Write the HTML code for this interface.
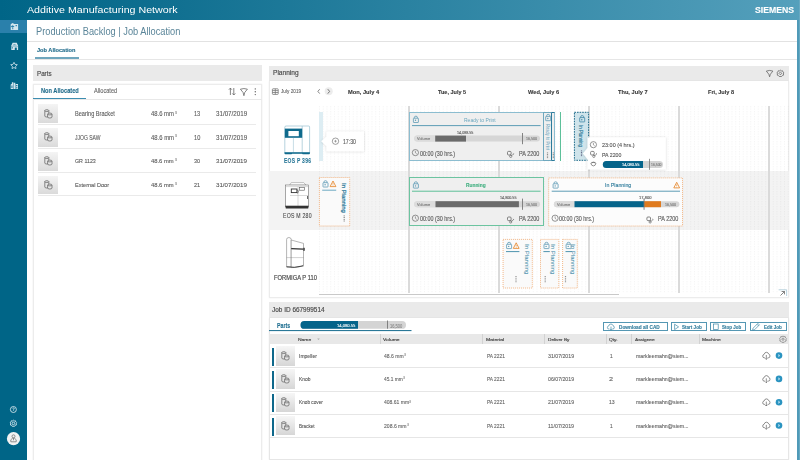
<!DOCTYPE html>
<html><head><meta charset="utf-8">
<style>
*{box-sizing:border-box}
html,body{margin:0;padding:0}
body{width:800px;height:460px;overflow:hidden;position:relative;background:#fff;font-family:"Liberation Sans",sans-serif;color:#555}
.a{position:absolute}
.t{position:absolute;white-space:nowrap;line-height:1;transform-origin:0 0;-webkit-text-stroke:0.1px currentColor}
svg{position:absolute;overflow:visible}
</style></head><body>

<div class="a" style="left:0px;top:0px;width:800px;height:20px;background:linear-gradient(90deg,#006587 0%,#0f6f90 20%,#55a0bc 100%)"></div>
<div class="t" style="left:26.75px;top:5.68px;font-size:8.42px;color:#fff;transform:scaleX(1.2688);-webkit-text-stroke:0;">Additive Manufacturing Network</div>
<div class="t" style="left:754.50px;top:6.57px;font-size:8.17px;font-weight:bold;color:#fff;transform:scaleX(1.0638);">SIEMENS</div>
<div class="a" style="left:0px;top:20px;width:26.5px;height:440px;background:#006587"></div>
<div class="a" style="left:0px;top:20px;width:26.5px;height:12.7px;background:#2a80ab"></div>
<div class="a" style="left:797px;top:20px;width:3px;height:440px;background:#4f9ab8"></div>
<div class="a" style="left:798.7px;top:0px;width:1.3px;height:460px;background:#68a9c2"></div>
<svg style="left:0;top:0" width="27" height="460" viewBox="0 0 27 460">
<g fill="#d3e5ee">
 <path d="M10.7 24.3l1.8-1.3 1.9 1.1h3.7v5.8h-7.4z"/>
 <path d="M11 46.2l1.6-3.4h4.2l1.5 3.4z M11.3 46.6h6.8v3.4h-6.8z"/>
 <path d="M14 62.3l1 2.1 2.3 0.3 -1.7 1.6 0.4 2.3 -2-1.1 -2 1.1 0.4-2.3 -1.7-1.6 2.3-0.3z" fill="none" stroke="#d3e5ee" stroke-width="0.8"/>
 <path d="M10.7 89v-4.6l1.2-0.6v-1.6h1.4v6.8z M13.7 89v-6.2h1.6v6.2z M15.7 89v-5h2.3v5z"/>
</g>
<g fill="#2a80ab"><path d="M12.6 25.2l1.9 1.3-1.9 1.3-1.9-1.3z"/><rect x="15.6" y="25" width="1.3" height="1.2"/><rect x="12.1" y="28.2" width="1.2" height="1"/></g>
<g fill="#006587"><path d="M12.3 45.2q1.8-1.2 4.8 0z"/><rect x="14.8" y="47.6" width="2" height="2.4"/><rect x="11.9" y="47.4" width="1" height="1"/><rect x="16.2" y="85" width="1.1" height="1.2"/><rect x="16.2" y="87.2" width="1.1" height="1.2"/><rect x="11.5" y="85.5" width="0.9" height="2.5"/></g>
<g fill="none" stroke="#e8f1f5" stroke-width="0.8">
 <circle cx="13.4" cy="409.5" r="3"/>
 <path d="M12.6 408.4q0.8-1 1.6 0q0.3 0.8-0.8 1.4v0.8"/>
 <circle cx="13.4" cy="423.4" r="1.3"/>
 <path d="M13.4 420.2l0.9 0.7 1.2-0.1 0.3 1.2 0.9 0.8-0.6 1 0.3 1.2-1.2 0.3-0.6 1h-2.4l-0.6-1-1.2-0.3 0.3-1.2-0.6-1 0.9-0.8 0.3-1.2 1.2 0.1z"/>
</g>
<circle cx="13.5" cy="438.7" r="6.6" fill="#f2f2f2"/>
<g fill="none" stroke="#777" stroke-width="0.8"><circle cx="13.5" cy="436.3" r="1.5"/><path d="M10.8 441.8v-2l1.6-1.5h2.2l1.6 1.5v2z M13.5 438.3v2"/></g>
</svg>
<div class="t" style="left:35.50px;top:26.63px;font-size:10.47px;color:#5a8599;transform:scaleX(0.8837);-webkit-text-stroke:0;">Production Backlog | Job Allocation</div>
<div class="a" style="left:26.5px;top:40.5px;width:770.5px;height:1.5px;background:#e2e2e2"></div>
<div class="t" style="left:36.50px;top:47.57px;font-size:5.10px;font-weight:bold;color:#1f6a8a;transform:scaleX(1.1014);">Job Allocation</div>
<div class="a" style="left:26.5px;top:58.6px;width:770.5px;height:1px;background:#e6e6e6"></div>
<div class="a" style="left:35px;top:57px;width:44px;height:1.8px;background:#6fa6bd"></div>
<div class="a" style="left:33px;top:65px;width:229px;height:15.6px;background:#eaeaea"></div>
<div class="t" style="left:36.50px;top:70.59px;font-size:6.28px;color:#4a4a4a;transform:scaleX(0.9932);-webkit-text-stroke:0.16px currentColor;">Parts</div>
<div class="a" style="left:33px;top:83.7px;width:229px;height:380px;background:#fff;border:1px solid #ececec;box-shadow:0 0 1.5px rgba(0,0,0,0.10)"></div>
<div class="t" style="left:40.50px;top:87.70px;font-size:6.49px;font-weight:bold;color:#1f6a8a;transform:scaleX(0.8713);">Non Allocated</div>
<div class="t" style="left:93.50px;top:87.70px;font-size:6.49px;color:#666;transform:scaleX(0.8689);">Allocated</div>
<div class="a" style="left:33.5px;top:98.6px;width:228px;height:0.8px;background:#e8e8e8"></div>
<div class="a" style="left:33px;top:98.1px;width:53.2px;height:1.4px;background:#3c8db0"></div>
<svg style="left:0;top:0" width="270" height="110" viewBox="0 0 270 110">
<g fill="none" stroke="#666" stroke-width="0.8">
 <path d="M230.4 95v-6.9 M228.9 89.7l1.5-1.6 1.5 1.6 M233.8 88v6.9 M232.3 93.4l1.5 1.6 1.5-1.6"/>
 <path d="M240.4 89.2q3.5-1.3 7 0l-2.7 3.3-0.8 3.2-0.8-3.2z"/>
</g>
<g fill="#666"><circle cx="255.3" cy="88.9" r="0.7"/><circle cx="255.3" cy="91.7" r="0.7"/><circle cx="255.3" cy="94.6" r="0.7"/></g>
</svg>
<div class="a" style="left:38.1px;top:104.3px;width:19.8px;height:18.8px;background:linear-gradient(#f4f4f4,#dadada)"></div>
<svg style="left:43.5px;top:108.60px" width="9" height="10" viewBox="0 0 9 10">
<g fill="#e6e6e6" stroke="#5a5a5a" stroke-width="0.7"><path d="M0.8 1.6v5.4q0 1 2 1t2-1v-5.4"/><ellipse cx="2.8" cy="1.6" rx="2" ry="0.9"/>
<path d="M3.6 5v3q0 1 2.2 1t2.2-1v-3"/><ellipse cx="5.8" cy="5" rx="2.2" ry="0.9"/></g></svg>
<div class="t" style="left:74.50px;top:110.61px;font-size:6.42px;color:#5a5a5a;transform:scaleX(0.8734);">Bearing Bracket</div>
<div class="t" style="left:150.50px;top:110.61px;font-size:6.42px;color:#5a5a5a;transform:scaleX(0.9169);">48.6 mm</div>
<div class="t" style="left:174.50px;top:111.59px;font-size:3.32px;color:#777;transform:scaleX(1.0010);">3</div>
<div class="t" style="left:193.50px;top:110.61px;font-size:6.42px;color:#5a5a5a;transform:scaleX(0.8674);">13</div>
<div class="t" style="left:215.50px;top:110.61px;font-size:6.42px;color:#5a5a5a;transform:scaleX(0.9697);">31/07/2019</div>
<div class="a" style="left:38px;top:124.2px;width:218px;height:0.8px;background:#eaeaea"></div>
<div class="a" style="left:38.1px;top:128.05px;width:19.8px;height:18.8px;background:linear-gradient(#f4f4f4,#dadada)"></div>
<svg style="left:43.5px;top:132.35px" width="9" height="10" viewBox="0 0 9 10">
<g fill="#e6e6e6" stroke="#5a5a5a" stroke-width="0.7"><path d="M0.8 1.6v5.4q0 1 2 1t2-1v-5.4"/><ellipse cx="2.8" cy="1.6" rx="2" ry="0.9"/>
<path d="M3.6 5v3q0 1 2.2 1t2.2-1v-3"/><ellipse cx="5.8" cy="5" rx="2.2" ry="0.9"/></g></svg>
<div class="t" style="left:74.50px;top:134.54px;font-size:6.56px;color:#5a5a5a;transform:scaleX(0.7645);">JJOG SAW</div>
<div class="t" style="left:150.50px;top:134.54px;font-size:6.56px;color:#5a5a5a;transform:scaleX(0.9042);">48.6 mm</div>
<div class="t" style="left:174.50px;top:134.84px;font-size:3.32px;color:#777;transform:scaleX(1.0010);">3</div>
<div class="t" style="left:193.50px;top:134.54px;font-size:6.56px;color:#5a5a5a;transform:scaleX(0.8586);">10</div>
<div class="t" style="left:215.50px;top:134.54px;font-size:6.56px;color:#5a5a5a;transform:scaleX(0.9514);">31/07/2019</div>
<div class="a" style="left:38px;top:147.95px;width:218px;height:0.8px;background:#eaeaea"></div>
<div class="a" style="left:38.1px;top:151.8px;width:19.8px;height:18.8px;background:linear-gradient(#f4f4f4,#dadada)"></div>
<svg style="left:43.5px;top:156.10px" width="9" height="10" viewBox="0 0 9 10">
<g fill="#e6e6e6" stroke="#5a5a5a" stroke-width="0.7"><path d="M0.8 1.6v5.4q0 1 2 1t2-1v-5.4"/><ellipse cx="2.8" cy="1.6" rx="2" ry="0.9"/>
<path d="M3.6 5v3q0 1 2.2 1t2.2-1v-3"/><ellipse cx="5.8" cy="5" rx="2.2" ry="0.9"/></g></svg>
<div class="t" style="left:74.50px;top:158.50px;font-size:5.22px;color:#5a5a5a;transform:scaleX(1.0149);">GR 1123</div>
<div class="t" style="left:150.50px;top:158.50px;font-size:5.22px;color:#5a5a5a;transform:scaleX(1.1178);">48.6 mm</div>
<div class="t" style="left:174.50px;top:158.84px;font-size:3.32px;color:#777;transform:scaleX(1.0010);">3</div>
<div class="t" style="left:193.50px;top:158.50px;font-size:5.22px;color:#5a5a5a;transform:scaleX(1.0421);">30</div>
<div class="t" style="left:215.50px;top:158.50px;font-size:5.22px;color:#5a5a5a;transform:scaleX(1.1865);">31/07/2019</div>
<div class="a" style="left:38px;top:171.7px;width:218px;height:0.8px;background:#eaeaea"></div>
<div class="a" style="left:38.1px;top:175.55px;width:19.8px;height:18.8px;background:linear-gradient(#f4f4f4,#dadada)"></div>
<svg style="left:43.5px;top:179.85px" width="9" height="10" viewBox="0 0 9 10">
<g fill="#e6e6e6" stroke="#5a5a5a" stroke-width="0.7"><path d="M0.8 1.6v5.4q0 1 2 1t2-1v-5.4"/><ellipse cx="2.8" cy="1.6" rx="2" ry="0.9"/>
<path d="M3.6 5v3q0 1 2.2 1t2.2-1v-3"/><ellipse cx="5.8" cy="5" rx="2.2" ry="0.9"/></g></svg>
<div class="t" style="left:74.50px;top:182.59px;font-size:5.28px;color:#5a5a5a;transform:scaleX(1.0571);">External Door</div>
<div class="t" style="left:150.50px;top:182.59px;font-size:5.28px;color:#5a5a5a;transform:scaleX(1.1066);">48.6 mm</div>
<div class="t" style="left:174.50px;top:182.59px;font-size:3.32px;color:#777;transform:scaleX(1.0010);">3</div>
<div class="t" style="left:193.50px;top:182.59px;font-size:5.28px;color:#5a5a5a;transform:scaleX(1.0360);">21</div>
<div class="t" style="left:215.50px;top:182.59px;font-size:5.28px;color:#5a5a5a;transform:scaleX(1.1735);">31/07/2019</div>
<div class="a" style="left:38px;top:195.45px;width:218px;height:0.8px;background:#eaeaea"></div>
<div class="a" style="left:269px;top:65.5px;width:519.7px;height:15.1px;background:#eaeaea"></div>
<div class="t" style="left:272.50px;top:69.70px;font-size:6.54px;color:#4a4a4a;transform:scaleX(1.0061);-webkit-text-stroke:0.16px currentColor;">Planning</div>
<svg style="left:0;top:0" width="800" height="100" viewBox="0 0 800 100">
<g fill="none" stroke="#666" stroke-width="0.8">
 <path d="M766.3 71.1q3.3-1.3 6.6 0l-2.5 3.1-0.8 2.6-0.8-2.6z"/>
 <path d="M780.4 72l1.4 1.4-1.4 1.4-1.4-1.4z"/>
 <path d="M780.4 70.2l1 0.7 1.2-0.1 0.4 1.2 0.9 0.9-0.6 1 0.3 1.2-1.2 0.4-0.8 1h-2.4l-0.8-1-1.2-0.4 0.3-1.2-0.6-1 0.9-0.9 0.4-1.2 1.2 0.1z"/>
</g></svg>
<div class="a" style="left:268.6px;top:80.6px;width:520.6px;height:217px;background:#fff;border:1px solid #ececec;border-top:none;box-shadow:0 0 1.5px rgba(0,0,0,0.08)"></div>
<div class="a" style="left:268.6px;top:171.3px;width:520.4px;height:58.3px;background:#f3f3f3"></div>
<svg style="left:319px;top:106px" width="470" height="186.5"><defs><pattern id="gd" width="3.75" height="2.5" patternUnits="userSpaceOnUse"><rect x="0" y="0" width="0.9" height="1.2" fill="#000" fill-opacity="0.045"/></pattern></defs><rect width="470" height="186.5" fill="url(#gd)"/></svg>
<div class="a" style="left:408.25px;top:106px;width:1.5px;height:186.5px;background:#dadada"></div>
<div class="a" style="left:498.25px;top:106px;width:1.5px;height:186.5px;background:#dadada"></div>
<div class="a" style="left:588.25px;top:106px;width:1.5px;height:186.5px;background:#dadada"></div>
<div class="a" style="left:678.25px;top:106px;width:1.5px;height:186.5px;background:#dadada"></div>
<div class="a" style="left:768.25px;top:106px;width:1.5px;height:186.5px;background:#dadada"></div>
<svg style="left:0;top:0" width="800" height="100" viewBox="0 0 800 100">
<g fill="none" stroke="#777" stroke-width="0.8"><rect x="272.4" y="88.8" width="5.8" height="5.6" rx="0.6"/><path d="M272.4 90.6h5.8 M275.3 88.8v5.6 M272.4 92.5h5.8"/></g>
<path d="M319.7 89.2l-1.8 2.2 1.8 2.2" fill="none" stroke="#666" stroke-width="0.8"/>
<circle cx="328.7" cy="91.3" r="4" fill="#ececec"/>
<path d="M327.8 89.2l1.8 2.2-1.8 2.2" fill="none" stroke="#555" stroke-width="0.8"/>
</svg>
<div class="t" style="left:280.75px;top:88.68px;font-size:5.34px;color:#666;transform:scaleX(0.8833);">July 2019</div>
<div class="t" style="left:347.75px;top:89.68px;font-size:5.34px;font-weight:bold;color:#383838;transform:scaleX(1.0705);">Mon, July 4</div>
<div class="t" style="left:437.50px;top:89.68px;font-size:5.34px;font-weight:bold;color:#383838;transform:scaleX(1.0344);">Tue, July 5</div>
<div class="t" style="left:527.50px;top:89.68px;font-size:5.34px;font-weight:bold;color:#383838;transform:scaleX(1.0632);">Wed, July 6</div>
<div class="t" style="left:617.50px;top:89.68px;font-size:5.34px;font-weight:bold;color:#383838;transform:scaleX(1.0625);">Thu, July 7</div>
<div class="t" style="left:707.50px;top:89.68px;font-size:5.34px;font-weight:bold;color:#383838;transform:scaleX(1.0480);">Fri, July 8</div>
<svg style="left:0;top:0" width="320" height="300" viewBox="0 0 320 300">
<g fill="#fff" stroke="#6ea6bc" stroke-width="0.5">
 <path d="M284.8 127.2q0-1.2 1.2-1.2h22.6q1 0 1 1v26h-24.8z"/>
 <path d="M302.2 126.2v26.8"/>
</g>
<rect x="284.8" y="128.6" width="17.4" height="9.2" fill="#0f6a8c"/>
<rect x="288.4" y="131" width="10.4" height="5.2" fill="#fff"/>
<path d="M293.4 137.8v14.5" stroke="#8fb9ca" stroke-width="0.5"/>
<path d="M284.5 152.3h25.4v1.2q0 0.7-0.7 0.7h-6.5l-0.6-0.5h-10l-0.6 0.5h-6.3q-0.7 0-0.7-0.7z" fill="#0f6a8c"/>
<path d="M289.5 185.2l1.8-2.6h12.4l2.4 2.6z" fill="#fff" stroke="#888" stroke-width="0.5"/>
<rect x="285.7" y="185" width="22.6" height="21.2" fill="#fff" stroke="#666" stroke-width="0.55"/>
<path d="M285.7 186.6h22.6 M298 186.6v19.5 M290 195.5h18" stroke="#aaa" stroke-width="0.45" fill="none"/>
<rect x="291.3" y="189" width="5.6" height="3.6" fill="#fff" stroke="#333" stroke-width="0.9"/>
<path d="M297.6 189.8q1.2 1.6 0 3.6" stroke="#333" stroke-width="0.7" fill="none"/>
<rect x="299.3" y="187.4" width="5.3" height="2.8" fill="#fff" stroke="#555" stroke-width="0.6"/>
<path d="M307.5 196v3" stroke="#444" stroke-width="0.8"/>
<path d="M285.2 205.8h23.6l-0.6 2.6h-22.4z" fill="#333"/>
<g fill="#fff" stroke="#777" stroke-width="0.55">
 <path d="M286.6 239.5q0-2 2.3-2t2.3 2v27.5h-4.6z"/>
 <path d="M291.2 240l12.3 3.4v21.6q-3 2.6-12.3 2.6z"/>
 <path d="M286.6 257.6h16.9" stroke-width="0.35"/>
</g>
<path d="M291.2 248.6l12 0.6" stroke="#333" stroke-width="1.2"/>
<rect x="303.2" y="247.8" width="1.6" height="3" fill="#444"/>
<path d="M286.6 266.8q7 1.5 17-1" stroke="#333" stroke-width="0.9" fill="none"/>
</svg>
<div class="t" style="left:283.50px;top:157.61px;font-size:6.42px;font-weight:bold;color:#2a7898;transform:scaleX(0.7763);letter-spacing:0.35px;">EOS P 396</div>
<div class="t" style="left:282.50px;top:212.59px;font-size:6.28px;color:#4a4a4a;transform:scaleX(0.8219);letter-spacing:0.3px;">EOS M 280</div>
<div class="t" style="left:273.75px;top:274.73px;font-size:6.37px;color:#4a4a4a;transform:scaleX(0.9102);-webkit-text-stroke:0.16px currentColor;">FORMIGA P 110</div>
<div class="a" style="left:319px;top:293.7px;width:300.3px;height:1.8px;background:#c9c9c9"></div>
<svg style="left:0;top:0" width="800" height="300" viewBox="0 0 800 300">
<path d="M778.6 289.8h8v6.2" fill="none" stroke="#9bbfd0" stroke-width="0.7"/>
<path d="M780.5 295.5l4-4 M781.6 291.5h2.9v2.9" fill="none" stroke="#666" stroke-width="0.8"/>
</svg>
<div class="a" style="left:319px;top:112px;width:3.5px;height:49px;background:#ddedf3"></div>
<svg style="left:0;top:0" width="800" height="300" viewBox="0 0 800 300">
<defs><filter id="sh" x="-20%" y="-30%" width="140%" height="160%"><feDropShadow dx="0" dy="0.3" stdDeviation="0.8" flood-color="#000" flood-opacity="0.18"/></filter></defs>
<path d="M326.4 131.5h37.6v19.7h-37.6v-5.3l-5.2-4.6 5.2-4.6z" fill="#fff" filter="url(#sh)"/>
<circle cx="335.5" cy="141.2" r="3.2" fill="none" stroke="#777" stroke-width="0.7"/>
<path d="M335.5 139.9v2.6 M334.2 141.2h2.6" stroke="#777" stroke-width="0.6"/>
</svg>
<div class="t" style="left:342.75px;top:138.59px;font-size:6.28px;color:#555;transform:scaleX(0.8224);">17:30</div>
<div class="a" style="left:408.5px;top:111.8px;width:135.10000000000002px;height:49.000000000000014px;border:1px solid #8cbdd0;background:#efefef"></div>
<svg style="left:0;top:0" width="800" height="460" viewBox="0 0 800 460"><path d="M414.4 118.19999999999999v-0.9q0-1.1 1.5-1.1t1.5 1.1v0.9" fill="none" stroke="#5e9bb5" stroke-width="0.8"/><rect x="413.4" y="118.19999999999999" width="5" height="4.3" rx="0.4" fill="none" stroke="#5e9bb5" stroke-width="0.8"/><circle cx="415.5" cy="120.3" r="0.7" fill="#5e9bb5"/><rect x="412.0" y="125.1" width="128.60000000000002" height="1" fill="#5e9db5"/><rect x="414.2" y="135.6" width="125.80000000000001" height="6.0" rx="3" fill="#d6d6d6"/><path d="M417.2 135.6h18.3v6.0h-18.3a3 3 0 0 1 0-6.0z" fill="#dcdcdc"/><rect x="435.2" y="135.6" width="30.80000000000001" height="6.0" fill="#6b6b6b"/><rect x="522.1" y="133.0" width="0.9" height="11.2" fill="#777"/><circle cx="415.4" cy="152.6" r="3.1" fill="none" stroke="#666" stroke-width="0.7"/><path d="M415.4 150.79999999999998v1.9l1.3 1.1" fill="none" stroke="#666" stroke-width="0.6"/><rect x="507.5" y="151.4" width="3.6" height="3.6" rx="1" fill="none" stroke="#666" stroke-width="0.8"/><circle cx="510.70000000000005" cy="156.4" r="1.1" fill="none" stroke="#666" stroke-width="0.7"/><path d="M510.5 154.7l1.3 1 1.9-1.9 M512.9 153.4l0.9 0.7" fill="none" stroke="#666" stroke-width="0.7"/></svg>
<div class="t" style="left:463.50px;top:117.57px;font-size:5.10px;color:#6aa6be;transform:scaleX(0.9816);-webkit-text-stroke:0;">Ready to Print</div>
<div class="t" style="left:416.50px;top:137.57px;font-size:3.80px;color:#777;transform:scaleX(1.0358);">Volume</div>
<div class="t" style="left:525.50px;top:137.57px;font-size:3.80px;color:#777;transform:scaleX(0.9595);">16,500</div>
<div class="t" style="left:456.75px;top:131.70px;font-size:3.56px;color:#555;transform:scaleX(1.0395);">14,088.55</div>
<div class="t" style="left:419.50px;top:150.61px;font-size:6.42px;color:#555;transform:scaleX(0.8432);">00:00 (30 hrs.)</div>
<div class="t" style="left:518.50px;top:150.61px;font-size:6.42px;color:#555;transform:scaleX(0.8570);">PA 2200</div>
<div class="a" style="left:543.3px;top:111.8px;width:8.4px;height:49px;background:#efefef;border:1px solid #6fa8be;border-right:1.2px solid #2d7a9a"></div>
<div class="a" style="left:551.5px;top:111.8px;width:3.7px;height:49px;background:#efefef;border:1px solid #2d7a9a;border-left:none;border-right:1px solid #8cbdd0"></div>
<svg style="left:0;top:0" width="800" height="460" viewBox="0 0 800 460"><path d="M546.6999999999999 116.39999999999999v-0.9q0-1.1 1.5-1.1t1.5 1.1v0.9" fill="none" stroke="#5e9bb5" stroke-width="0.8"/><rect x="545.6999999999999" y="116.39999999999999" width="5" height="4.3" rx="0.4" fill="none" stroke="#5e9bb5" stroke-width="0.8"/><circle cx="547.8" cy="118.5" r="0.7" fill="#5e9bb5"/><rect x="546.9" y="152.50" width="1.2" height="0.8" fill="#777"/><rect x="546.9" y="154.10" width="1.2" height="0.8" fill="#777"/><rect x="546.9" y="155.70" width="1.2" height="0.8" fill="#777"/><rect x="546.9" y="157.30" width="1.2" height="0.8" fill="#777"/><rect x="552.6999999999999" y="152.50" width="1.2" height="0.8" fill="#777"/><rect x="552.6999999999999" y="154.10" width="1.2" height="0.8" fill="#777"/><rect x="552.6999999999999" y="155.70" width="1.2" height="0.8" fill="#777"/><rect x="552.6999999999999" y="157.30" width="1.2" height="0.8" fill="#777"/></svg>
<div class="t" style="left:550.03px;top:123.60px;font-size:5.59px;color:#6aa6be;transform:rotate(90deg) scaleX(0.7346);-webkit-text-stroke:0;">Ready to Print</div>
<div class="a" style="left:559.6px;top:112px;width:1.2px;height:49px;background:#5dc09a"></div>
<svg style="left:0;top:0" width="800" height="460" viewBox="0 0 800 460"><rect x="574.4" y="112.3" width="14.2" height="48" fill="#cfe4eb" stroke="#1c6a89" stroke-width="1" stroke-dasharray="1.6 1"/></svg>
<svg style="left:0;top:0" width="800" height="460" viewBox="0 0 800 460"><path d="M580.6999999999999 117.6v-0.9q0-1.1 1.5-1.1t1.5 1.1v0.9" fill="none" stroke="#3f87a6" stroke-width="0.8"/><rect x="579.6999999999999" y="117.6" width="5" height="4.3" rx="0.4" fill="none" stroke="#3f87a6" stroke-width="0.8"/><circle cx="581.8" cy="119.7" r="0.7" fill="#3f87a6"/><rect x="580.9" y="150.50" width="1.2" height="0.8" fill="#557"/><rect x="580.9" y="152.10" width="1.2" height="0.8" fill="#557"/><rect x="580.9" y="153.70" width="1.2" height="0.8" fill="#557"/><rect x="580.9" y="155.30" width="1.2" height="0.8" fill="#557"/></svg>
<div class="t" style="left:583.43px;top:125.00px;font-size:5.59px;color:#2d7a9a;transform:rotate(90deg) scaleX(0.7868);-webkit-text-stroke:0.15px currentColor;">In Planning</div>
<svg style="left:0;top:0" width="800" height="300" viewBox="0 0 800 300">
<path d="M587.5 137.3h78.3v32.1h-78.3v-10.2l-4.6-5.6 4.6-5.6z" fill="#fff" filter="url(#sh)"/>
</svg>
<svg style="left:0;top:0" width="800" height="460" viewBox="0 0 800 460"><circle cx="593.4" cy="144.7" r="3.1" fill="none" stroke="#666" stroke-width="0.7"/><path d="M593.4 142.89999999999998v1.9l1.3 1.1" fill="none" stroke="#666" stroke-width="0.6"/><rect x="590.6" y="151.4" width="3.6" height="3.6" rx="1" fill="none" stroke="#666" stroke-width="0.8"/><circle cx="593.8000000000001" cy="156.4" r="1.1" fill="none" stroke="#666" stroke-width="0.7"/><path d="M593.6 154.7l1.3 1 1.9-1.9 M596.0 153.4l0.9 0.7" fill="none" stroke="#666" stroke-width="0.7"/><path d="M590.8 163.3q2.6-2.2 5.2 0q-0.6 2.6-2.6 2.6t-2.6-2.6z M591.6 162.4h3.6" fill="none" stroke="#666" stroke-width="0.7"/><rect x="602.8" y="161" width="60.2" height="7" rx="3.5" fill="#d4d4d4"/><path d="M606.3 161h36.7v7h-36.7a3.5 3.5 0 0 1 0-7z" fill="#05648a"/><rect x="649.1" y="158.8" width="0.8" height="11" fill="#777"/></svg>
<div class="t" style="left:601.75px;top:142.57px;font-size:5.10px;color:#555;transform:scaleX(1.0720);">23:00 (4 hrs.)</div>
<div class="t" style="left:601.75px;top:153.70px;font-size:4.87px;color:#555;transform:scaleX(1.0779);">PA 2200</div>
<div class="t" style="left:621.50px;top:163.70px;font-size:3.56px;color:#fff;transform:scaleX(1.1007);">14,080.55</div>
<div class="t" style="left:650.50px;top:163.70px;font-size:3.56px;color:#777;transform:scaleX(0.9629);">16,500</div>
<svg style="left:0;top:0" width="800" height="460" viewBox="0 0 800 460"><rect x="319.4" y="177.5" width="30.30000000000001" height="48.5" fill="#fafafa" stroke="#f2b07a" stroke-width="0.9" stroke-dasharray="1 1"/></svg>
<svg style="left:0;top:0" width="800" height="460" viewBox="0 0 800 460"><path d="M324.0 182.7v-0.9q0-1.1 1.5-1.1t1.5 1.1v0.9" fill="none" stroke="#5e9bb5" stroke-width="0.8"/><rect x="323.0" y="182.7" width="5" height="4.3" rx="0.4" fill="none" stroke="#5e9bb5" stroke-width="0.8"/><circle cx="325.1" cy="184.79999999999998" r="0.7" fill="#5e9bb5"/><path d="M333.0 181.0l2.9 5.6h-5.8z" fill="none" stroke="#e5801f" stroke-width="0.8" stroke-linejoin="round"/><path d="M333.0 183.1v1.6" stroke="#e5801f" stroke-width="0.6"/><circle cx="333.0" cy="185.6" r="0.3" fill="#e5801f"/><rect x="322.2" y="189.6" width="14" height="1.3" fill="#8dbccf"/><rect x="343.59999999999997" y="215.50" width="1.2" height="0.8" fill="#666"/><rect x="343.59999999999997" y="217.20" width="1.2" height="0.8" fill="#666"/><rect x="343.59999999999997" y="218.90" width="1.2" height="0.8" fill="#666"/><rect x="343.59999999999997" y="220.60" width="1.2" height="0.8" fill="#666"/></svg>
<div class="t" style="left:346.90px;top:182.50px;font-size:6.15px;color:#2d7a9a;transform:rotate(90deg) scaleX(0.9721);-webkit-text-stroke:0.25px currentColor;">In Planning</div>
<div class="a" style="left:408.5px;top:177.4px;width:135.10000000000002px;height:49.099999999999994px;border:1px solid #6cc4a0;background:#efefef"></div>
<svg style="left:0;top:0" width="800" height="460" viewBox="0 0 800 460"><path d="M414.4 183.8v-0.9q0-1.1 1.5-1.1t1.5 1.1v0.9" fill="none" stroke="#5e9bb5" stroke-width="0.8"/><rect x="413.4" y="183.8" width="5" height="4.3" rx="0.4" fill="none" stroke="#5e9bb5" stroke-width="0.8"/><circle cx="415.5" cy="185.9" r="0.7" fill="#5e9bb5"/><rect x="412.0" y="190.70000000000002" width="128.60000000000002" height="1" fill="#5dbf98"/><rect x="414.2" y="201.20000000000002" width="125.80000000000001" height="6.0" rx="3" fill="#d6d6d6"/><path d="M417.2 201.20000000000002h18.3v6.0h-18.3a3 3 0 0 1 0-6.0z" fill="#dcdcdc"/><rect x="435.5" y="201.20000000000002" width="83.39999999999998" height="6.0" fill="#6b6b6b"/><rect x="522.1" y="198.60000000000002" width="0.9" height="11.2" fill="#777"/><circle cx="415.4" cy="218.2" r="3.1" fill="none" stroke="#666" stroke-width="0.7"/><path d="M415.4 216.39999999999998v1.9l1.3 1.1" fill="none" stroke="#666" stroke-width="0.6"/><rect x="507.5" y="217.0" width="3.6" height="3.6" rx="1" fill="none" stroke="#666" stroke-width="0.8"/><circle cx="510.70000000000005" cy="222.0" r="1.1" fill="none" stroke="#666" stroke-width="0.7"/><path d="M510.5 220.29999999999998l1.3 1 1.9-1.9 M512.9 219.0l0.9 0.7" fill="none" stroke="#666" stroke-width="0.7"/></svg>
<div class="t" style="left:465.50px;top:182.63px;font-size:4.99px;font-weight:bold;color:#3fae7f;transform:scaleX(0.9733);">Running</div>
<div class="t" style="left:416.50px;top:203.57px;font-size:3.80px;color:#777;transform:scaleX(1.0358);">Volume</div>
<div class="t" style="left:525.50px;top:203.57px;font-size:3.80px;color:#777;transform:scaleX(0.9595);">16,500</div>
<div class="t" style="left:499.50px;top:196.70px;font-size:3.56px;color:#555;transform:scaleX(1.0416);">14,800.55</div>
<div class="t" style="left:419.50px;top:215.61px;font-size:6.42px;color:#555;transform:scaleX(0.8432);">00:00 (30 hrs.)</div>
<div class="t" style="left:518.50px;top:215.61px;font-size:6.42px;color:#555;transform:scaleX(0.8570);">PA 2200</div>
<svg style="left:0;top:0" width="800" height="460" viewBox="0 0 800 460"><rect x="548.7" y="177.9" width="133.79999999999995" height="48.099999999999994" fill="#fcfcfc" stroke="#f2b07a" stroke-width="0.9" stroke-dasharray="1 1"/></svg>
<svg style="left:0;top:0" width="800" height="460" viewBox="0 0 800 460"><path d="M554.1 183.8v-0.9q0-1.1 1.5-1.1t1.5 1.1v0.9" fill="none" stroke="#5e9bb5" stroke-width="0.8"/><rect x="553.1" y="183.8" width="5" height="4.3" rx="0.4" fill="none" stroke="#5e9bb5" stroke-width="0.8"/><circle cx="555.2" cy="185.9" r="0.7" fill="#5e9bb5"/><path d="M676.7 182.3l2.9 5.6h-5.8z" fill="none" stroke="#e5801f" stroke-width="0.8" stroke-linejoin="round"/><path d="M676.7 184.4v1.6" stroke="#e5801f" stroke-width="0.6"/><circle cx="676.7" cy="186.9" r="0.3" fill="#e5801f"/><rect x="551.7" y="190.70000000000002" width="128.29999999999995" height="1" fill="#5e9db5"/><rect x="553.9000000000001" y="201.20000000000002" width="125.49999999999989" height="6.0" rx="3" fill="#d6d6d6"/><path d="M556.9000000000001 201.20000000000002h18.3v6.0h-18.3a3 3 0 0 1 0-6.0z" fill="#dcdcdc"/><rect x="574.5" y="201.20000000000002" width="69.5" height="6.0" fill="#05648a"/><rect x="644" y="201.20000000000002" width="17" height="6.0" fill="#e07b1f"/><rect x="643.6" y="198.60000000000002" width="0.9" height="11.2" fill="#777"/><circle cx="555.1" cy="218.2" r="3.1" fill="none" stroke="#666" stroke-width="0.7"/><path d="M555.1 216.39999999999998v1.9l1.3 1.1" fill="none" stroke="#666" stroke-width="0.6"/><rect x="646.9" y="217.0" width="3.6" height="3.6" rx="1" fill="none" stroke="#666" stroke-width="0.8"/><circle cx="650.1" cy="222.0" r="1.1" fill="none" stroke="#666" stroke-width="0.7"/><path d="M649.9 220.29999999999998l1.3 1 1.9-1.9 M652.3 219.0l0.9 0.7" fill="none" stroke="#666" stroke-width="0.7"/></svg>
<div class="t" style="left:604.50px;top:182.63px;font-size:4.99px;color:#2d7a9a;transform:scaleX(1.0540);">In Planning</div>
<div class="t" style="left:556.50px;top:203.57px;font-size:3.80px;color:#777;transform:scaleX(1.0358);">Volume</div>
<div class="t" style="left:664.75px;top:203.57px;font-size:3.80px;color:#777;transform:scaleX(0.9595);">16,500</div>
<div class="t" style="left:638.50px;top:196.70px;font-size:3.56px;color:#555;transform:scaleX(1.1423);">17,800</div>
<div class="t" style="left:558.75px;top:215.61px;font-size:6.42px;color:#555;transform:scaleX(0.8432);">00:00 (30 hrs.)</div>
<div class="t" style="left:657.50px;top:215.61px;font-size:6.42px;color:#555;transform:scaleX(0.8570);">PA 2200</div>
<svg style="left:0;top:0" width="800" height="460" viewBox="0 0 800 460"><rect x="503.1" y="239.4" width="29.199999999999932" height="48.599999999999994" fill="#fafafa" stroke="#f2b07a" stroke-width="0.9" stroke-dasharray="1 1"/></svg>
<svg style="left:0;top:0" width="800" height="460" viewBox="0 0 800 460"><path d="M507.6 244.29999999999998v-0.9q0-1.1 1.5-1.1t1.5 1.1v0.9" fill="none" stroke="#5e9bb5" stroke-width="0.8"/><rect x="506.6" y="244.29999999999998" width="5" height="4.3" rx="0.4" fill="none" stroke="#5e9bb5" stroke-width="0.8"/><circle cx="508.70000000000005" cy="246.39999999999998" r="0.7" fill="#5e9bb5"/><rect x="506.0" y="251" width="13.4" height="1.1" fill="#5e9db5"/><rect x="515.4" y="276.00" width="1.2" height="0.8" fill="#777"/><rect x="515.4" y="277.80" width="1.2" height="0.8" fill="#777"/><rect x="515.4" y="279.60" width="1.2" height="0.8" fill="#777"/><rect x="515.4" y="281.40" width="1.2" height="0.8" fill="#777"/><path d="M516.2 242.8l2.9 5.6h-5.8z" fill="none" stroke="#e5801f" stroke-width="0.8" stroke-linejoin="round"/><path d="M516.2 244.9v1.6" stroke="#e5801f" stroke-width="0.6"/><circle cx="516.2" cy="247.4" r="0.3" fill="#e5801f"/></svg>
<div class="t" style="left:530.13px;top:243.50px;font-size:6.01px;color:#3f8aa8;transform:rotate(90deg) scaleX(1.0147);-webkit-text-stroke:0.05px currentColor;">In Planning</div>
<svg style="left:0;top:0" width="800" height="460" viewBox="0 0 800 460"><rect x="540.5" y="239.4" width="18.299999999999955" height="48.599999999999994" fill="#fafafa" stroke="#f2b07a" stroke-width="0.9" stroke-dasharray="1 1"/></svg>
<svg style="left:0;top:0" width="800" height="460" viewBox="0 0 800 460"><path d="M545.0 244.29999999999998v-0.9q0-1.1 1.5-1.1t1.5 1.1v0.9" fill="none" stroke="#5e9bb5" stroke-width="0.8"/><rect x="544.0" y="244.29999999999998" width="5" height="4.3" rx="0.4" fill="none" stroke="#5e9bb5" stroke-width="0.8"/><circle cx="546.1" cy="246.39999999999998" r="0.7" fill="#5e9bb5"/><rect x="543.4" y="251" width="6.4" height="1.1" fill="#5e9db5"/><rect x="544.6" y="276.00" width="1.2" height="0.8" fill="#777"/><rect x="544.6" y="277.80" width="1.2" height="0.8" fill="#777"/><rect x="544.6" y="279.60" width="1.2" height="0.8" fill="#777"/><rect x="544.6" y="281.40" width="1.2" height="0.8" fill="#777"/></svg>
<div class="t" style="left:556.33px;top:243.50px;font-size:6.01px;color:#3f8aa8;transform:rotate(90deg) scaleX(1.0147);-webkit-text-stroke:0.05px currentColor;">In Planning</div>
<svg style="left:0;top:0" width="800" height="460" viewBox="0 0 800 460"><rect x="562.6" y="239.4" width="14.699999999999932" height="48.599999999999994" fill="#fafafa" stroke="#f2b07a" stroke-width="0.9" stroke-dasharray="1 1"/></svg>
<svg style="left:0;top:0" width="800" height="460" viewBox="0 0 800 460"><path d="M567.1 244.29999999999998v-0.9q0-1.1 1.5-1.1t1.5 1.1v0.9" fill="none" stroke="#5e9bb5" stroke-width="0.8"/><rect x="566.1" y="244.29999999999998" width="5" height="4.3" rx="0.4" fill="none" stroke="#5e9bb5" stroke-width="0.8"/><circle cx="568.2" cy="246.39999999999998" r="0.7" fill="#5e9bb5"/><rect x="565.5" y="251" width="6.4" height="1.1" fill="#5e9db5"/><rect x="564.9" y="276.00" width="1.2" height="0.8" fill="#777"/><rect x="564.9" y="277.80" width="1.2" height="0.8" fill="#777"/><rect x="564.9" y="279.60" width="1.2" height="0.8" fill="#777"/><rect x="564.9" y="281.40" width="1.2" height="0.8" fill="#777"/></svg>
<div class="t" style="left:576.43px;top:243.50px;font-size:6.01px;color:#3f8aa8;transform:rotate(90deg) scaleX(1.0147);-webkit-text-stroke:0.05px currentColor;">In Planning</div>
<div class="a" style="left:269px;top:302px;width:519.8px;height:15.5px;background:#eaeaea"></div>
<div class="t" style="left:271.50px;top:307.04px;font-size:6.60px;color:#4a4a4a;transform:scaleX(0.9755);-webkit-text-stroke:0.16px currentColor;">Job ID 667999514</div>
<div class="a" style="left:269px;top:317.5px;width:520px;height:142.3px;background:#fff;border:1px solid #e6e6e6;border-top:none;box-shadow:0 0 1.5px rgba(0,0,0,0.08)"></div>
<div class="t" style="left:276.50px;top:322.61px;font-size:6.42px;font-weight:bold;color:#1f6e90;transform:scaleX(0.8223);">Parts</div>
<svg style="left:0;top:0" width="800" height="460" viewBox="0 0 800 460"><rect x="300.5" y="321" width="105.5" height="7.8" rx="3.9" fill="#d4d4d4"/><path d="M304.4 321h53.6v7.8h-53.6a3.9 3.9 0 0 1 0-7.8z" fill="#05648a"/><rect x="387.1" y="320.5" width="0.9" height="8.2" fill="#777"/><rect x="269" y="330" width="142.5" height="1.1" fill="#2a7898"/></svg>
<div class="t" style="left:336.50px;top:323.68px;font-size:4.04px;color:#fff;transform:scaleX(1.0172);">14,080.55</div>
<div class="t" style="left:389.75px;top:324.54px;font-size:4.53px;color:#888;transform:scaleX(0.8960);">16,500</div>
<div class="a" style="left:603px;top:322.2px;width:64.79999999999995px;height:9.2px;border:1px solid #5597b3;background:#fff"></div>
<div class="t" style="left:618.50px;top:325.73px;font-size:4.65px;font-weight:bold;color:#2f7b9b;transform:scaleX(1.0199);">Download all CAD</div>
<div class="a" style="left:671px;top:322.2px;width:35.5px;height:9.2px;border:1px solid #5597b3;background:#fff"></div>
<div class="t" style="left:681.75px;top:325.73px;font-size:4.65px;font-weight:bold;color:#2f7b9b;transform:scaleX(0.9782);">Start Job</div>
<div class="a" style="left:710.2px;top:322.2px;width:35.59999999999991px;height:9.2px;border:1px solid #5597b3;background:#fff"></div>
<div class="t" style="left:721.50px;top:325.73px;font-size:4.65px;font-weight:bold;color:#2f7b9b;transform:scaleX(0.9662);">Stop Job</div>
<div class="a" style="left:750px;top:322.2px;width:36.60000000000002px;height:9.2px;border:1px solid #5597b3;background:#fff"></div>
<div class="t" style="left:763.50px;top:325.73px;font-size:4.65px;font-weight:bold;color:#2f7b9b;transform:scaleX(0.9664);">Edit Job</div>
<svg style="left:0;top:0" width="800" height="460" viewBox="0 0 800 460"><g fill="none" stroke="#3f89a8" stroke-width="0.7"><path d="M609.4 329h-0.6q-1.4 0-1.4-1.5q0-1.4 1.3-1.5q0.4-2 2.2-2q1.7 0 2.1 1.7q1.3 0.2 1.3 1.8q0 1.5-1.5 1.5h-0.6 M611 326.6v3.4 M610.1 329.2l0.9 0.9 0.9-0.9"/><path d="M674.6 324.2v5.4l4-2.7z"/><rect x="713.4" y="324" width="4.8" height="5.6"/><path d="M752.6 330.2l0.5-2 4.8-4.8 1.5 1.5-4.8 4.8z M757 324.3l1.5 1.5"/></g></svg>
<div class="a" style="left:269px;top:334px;width:520px;height:10px;background:#e8e8e8"></div>
<div class="a" style="left:379.5px;top:334px;width:0.8px;height:10px;background:#d2d2d2"></div>
<div class="a" style="left:482.4px;top:334px;width:0.8px;height:10px;background:#d2d2d2"></div>
<div class="a" style="left:544.4px;top:334px;width:0.8px;height:10px;background:#d2d2d2"></div>
<div class="a" style="left:605.7px;top:334px;width:0.8px;height:10px;background:#d2d2d2"></div>
<div class="a" style="left:631.4px;top:334px;width:0.8px;height:10px;background:#d2d2d2"></div>
<div class="a" style="left:698.8px;top:334px;width:0.8px;height:10px;background:#d2d2d2"></div>
<div class="t" style="left:297.75px;top:337.68px;font-size:4.04px;color:#4a4a4a;transform:scaleX(1.2248);-webkit-text-stroke:0.16px currentColor;">Name</div>
<div class="t" style="left:382.50px;top:337.68px;font-size:4.04px;color:#4a4a4a;transform:scaleX(1.2378);-webkit-text-stroke:0.16px currentColor;">Volume</div>
<div class="t" style="left:485.50px;top:337.68px;font-size:4.04px;color:#4a4a4a;transform:scaleX(1.2637);-webkit-text-stroke:0.16px currentColor;">Material</div>
<div class="t" style="left:547.50px;top:337.68px;font-size:4.04px;color:#4a4a4a;transform:scaleX(1.1656);-webkit-text-stroke:0.16px currentColor;">Deliver By</div>
<div class="t" style="left:608.50px;top:337.68px;font-size:4.04px;color:#4a4a4a;transform:scaleX(1.2041);-webkit-text-stroke:0.16px currentColor;">Qty.</div>
<div class="t" style="left:634.50px;top:337.68px;font-size:4.04px;color:#4a4a4a;transform:scaleX(1.1858);-webkit-text-stroke:0.16px currentColor;">Assignee</div>
<div class="t" style="left:701.50px;top:337.68px;font-size:4.04px;color:#4a4a4a;transform:scaleX(1.2240);-webkit-text-stroke:0.16px currentColor;">Machine</div>
<svg style="left:0;top:0" width="800" height="460" viewBox="0 0 800 460"><path d="M317.2 338.6h2.6l-1.3 1.5z" fill="#aaa"/><g fill="none" stroke="#777" stroke-width="0.7"><circle cx="783" cy="339.2" r="1.1"/><path d="M783 336l1 0.7 1.2-0.1 0.4 1.2 0.9 0.9-0.6 1 0.3 1.2-1.2 0.4-0.8 1h-2.4l-0.8-1-1.2-0.4 0.3-1.2-0.6-1 0.9-0.9 0.4-1.2 1.2 0.1z"/></g></svg>
<div class="a" style="left:271.7px;top:347.8px;width:2.1px;height:18px;background:#0e688b"></div>
<div class="a" style="left:275.8px;top:346.0px;width:19.7px;height:19.5px;background:linear-gradient(#f6f6f6,#d6d6d6)"></div>
<svg style="left:281.2px;top:350.60px" width="9" height="10" viewBox="0 0 9 10">
<g fill="#e6e6e6" stroke="#5a5a5a" stroke-width="0.7"><path d="M0.8 1.6v5.4q0 1 2 1t2-1v-5.4"/><ellipse cx="2.8" cy="1.6" rx="2" ry="0.9"/>
<path d="M3.6 5v3q0 1 2.2 1t2.2-1v-3"/><ellipse cx="5.8" cy="5" rx="2.2" ry="0.9"/></g></svg>
<div class="t" style="left:298.50px;top:354.59px;font-size:4.63px;color:#585858;transform:scaleX(1.0844);">Impeller</div>
<div class="t" style="left:383.50px;top:354.59px;font-size:4.63px;color:#666;transform:scaleX(1.0882);">48.6 mm</div>
<div class="t" style="left:403.50px;top:353.61px;font-size:2.85px;color:#888;transform:scaleX(1.2631);">3</div>
<div class="t" style="left:486.50px;top:354.59px;font-size:4.63px;color:#666;transform:scaleX(1.0382);">PA 2221</div>
<div class="t" style="left:547.50px;top:354.59px;font-size:4.63px;color:#666;transform:scaleX(1.1259);">31/07/2019</div>
<div class="t" style="left:609.50px;top:354.59px;font-size:4.63px;color:#666;transform:scaleX(1.0420);">1</div>
<div class="t" style="left:635.50px;top:354.59px;font-size:4.63px;color:#666;transform:scaleX(1.1347);">markleemahn@siem...</div>
<svg style="left:0;top:0" width="800" height="460" viewBox="0 0 800 460"><g fill="none" stroke="#555" stroke-width="0.65"><path d="M765 357.79999999999995h-0.8q-1.5 0-1.5-1.7q0-1.5 1.4-1.7q0.5-2.1 2.3-2.1q1.8 0 2.3 1.8q1.3 0.3 1.3 1.9q0 1.8-1.7 1.8h-0.7 M766.3 355.0v4.4 M765.3 358.4l1 1 1-1"/></g><circle cx="779" cy="355.59999999999997" r="3.3" fill="#2a93c0"/><path d="M778.2 354.4l1.8 1.2-1.8 1.2" fill="#8ccbe4" stroke="#cde9f4" stroke-width="0.5"/></svg>
<div class="a" style="left:269.5px;top:367.3px;width:519px;height:0.8px;background:#e6e6e6"></div>
<div class="a" style="left:271.7px;top:371.1px;width:2.1px;height:18px;background:#0e688b"></div>
<div class="a" style="left:275.8px;top:369.3px;width:19.7px;height:19.5px;background:linear-gradient(#f6f6f6,#d6d6d6)"></div>
<svg style="left:281.2px;top:373.90px" width="9" height="10" viewBox="0 0 9 10">
<g fill="#e6e6e6" stroke="#5a5a5a" stroke-width="0.7"><path d="M0.8 1.6v5.4q0 1 2 1t2-1v-5.4"/><ellipse cx="2.8" cy="1.6" rx="2" ry="0.9"/>
<path d="M3.6 5v3q0 1 2.2 1t2.2-1v-3"/><ellipse cx="5.8" cy="5" rx="2.2" ry="0.9"/></g></svg>
<div class="t" style="left:298.50px;top:377.59px;font-size:4.63px;color:#585858;transform:scaleX(1.0682);">Knob</div>
<div class="t" style="left:383.50px;top:377.59px;font-size:4.63px;color:#666;transform:scaleX(1.0354);">45.1 mm</div>
<div class="t" style="left:402.50px;top:377.11px;font-size:2.85px;color:#888;transform:scaleX(1.2631);">3</div>
<div class="t" style="left:486.50px;top:377.59px;font-size:4.63px;color:#666;transform:scaleX(1.0382);">PA 2221</div>
<div class="t" style="left:547.50px;top:377.59px;font-size:4.63px;color:#666;transform:scaleX(1.1259);">06/07/2019</div>
<div class="t" style="left:608.75px;top:377.59px;font-size:4.63px;color:#666;transform:scaleX(1.5686);">2</div>
<div class="t" style="left:635.50px;top:377.59px;font-size:4.63px;color:#666;transform:scaleX(1.1347);">markleemahn@siem...</div>
<svg style="left:0;top:0" width="800" height="460" viewBox="0 0 800 460"><g fill="none" stroke="#555" stroke-width="0.65"><path d="M765 381.09999999999997h-0.8q-1.5 0-1.5-1.7q0-1.5 1.4-1.7q0.5-2.1 2.3-2.1q1.8 0 2.3 1.8q1.3 0.3 1.3 1.9q0 1.8-1.7 1.8h-0.7 M766.3 378.3v4.4 M765.3 381.7l1 1 1-1"/></g><circle cx="779" cy="378.9" r="3.3" fill="#2a93c0"/><path d="M778.2 377.7l1.8 1.2-1.8 1.2" fill="#8ccbe4" stroke="#cde9f4" stroke-width="0.5"/></svg>
<div class="a" style="left:269.5px;top:390.6px;width:519px;height:0.8px;background:#e6e6e6"></div>
<div class="a" style="left:271.7px;top:394.40000000000003px;width:2.1px;height:18px;background:#0e688b"></div>
<div class="a" style="left:275.8px;top:392.6px;width:19.7px;height:19.5px;background:linear-gradient(#f6f6f6,#d6d6d6)"></div>
<svg style="left:281.2px;top:397.20px" width="9" height="10" viewBox="0 0 9 10">
<g fill="#e6e6e6" stroke="#5a5a5a" stroke-width="0.7"><path d="M0.8 1.6v5.4q0 1 2 1t2-1v-5.4"/><ellipse cx="2.8" cy="1.6" rx="2" ry="0.9"/>
<path d="M3.6 5v3q0 1 2.2 1t2.2-1v-3"/><ellipse cx="5.8" cy="5" rx="2.2" ry="0.9"/></g></svg>
<div class="t" style="left:298.50px;top:400.59px;font-size:4.63px;color:#585858;transform:scaleX(1.0205);">Knob cover</div>
<div class="t" style="left:383.50px;top:400.59px;font-size:4.63px;color:#666;transform:scaleX(1.0850);">408.61 mm</div>
<div class="t" style="left:408.75px;top:400.61px;font-size:2.85px;color:#888;transform:scaleX(1.2631);">3</div>
<div class="t" style="left:486.50px;top:400.59px;font-size:4.63px;color:#666;transform:scaleX(1.0382);">PA 2221</div>
<div class="t" style="left:547.50px;top:400.59px;font-size:4.63px;color:#666;transform:scaleX(1.1259);">21/07/2019</div>
<div class="t" style="left:608.75px;top:400.59px;font-size:4.63px;color:#666;transform:scaleX(1.1011);">13</div>
<div class="t" style="left:635.50px;top:400.59px;font-size:4.63px;color:#666;transform:scaleX(1.1347);">markleemahn@siem...</div>
<svg style="left:0;top:0" width="800" height="460" viewBox="0 0 800 460"><g fill="none" stroke="#555" stroke-width="0.65"><path d="M765 404.4h-0.8q-1.5 0-1.5-1.7q0-1.5 1.4-1.7q0.5-2.1 2.3-2.1q1.8 0 2.3 1.8q1.3 0.3 1.3 1.9q0 1.8-1.7 1.8h-0.7 M766.3 401.6v4.4 M765.3 405.0l1 1 1-1"/></g><circle cx="779" cy="402.2" r="3.3" fill="#2a93c0"/><path d="M778.2 401.0l1.8 1.2-1.8 1.2" fill="#8ccbe4" stroke="#cde9f4" stroke-width="0.5"/></svg>
<div class="a" style="left:269.5px;top:413.90000000000003px;width:519px;height:0.8px;background:#e6e6e6"></div>
<div class="a" style="left:271.7px;top:417.7px;width:2.1px;height:18px;background:#0e688b"></div>
<div class="a" style="left:275.8px;top:415.9px;width:19.7px;height:19.5px;background:linear-gradient(#f6f6f6,#d6d6d6)"></div>
<svg style="left:281.2px;top:420.50px" width="9" height="10" viewBox="0 0 9 10">
<g fill="#e6e6e6" stroke="#5a5a5a" stroke-width="0.7"><path d="M0.8 1.6v5.4q0 1 2 1t2-1v-5.4"/><ellipse cx="2.8" cy="1.6" rx="2" ry="0.9"/>
<path d="M3.6 5v3q0 1 2.2 1t2.2-1v-3"/><ellipse cx="5.8" cy="5" rx="2.2" ry="0.9"/></g></svg>
<div class="t" style="left:298.50px;top:424.59px;font-size:4.63px;color:#585858;transform:scaleX(0.9962);">Bracket</div>
<div class="t" style="left:383.50px;top:424.59px;font-size:4.63px;color:#666;transform:scaleX(1.0978);">208.6 mm</div>
<div class="t" style="left:406.50px;top:423.61px;font-size:2.85px;color:#888;transform:scaleX(1.2631);">3</div>
<div class="t" style="left:486.50px;top:424.59px;font-size:4.63px;color:#666;transform:scaleX(1.0382);">PA 2221</div>
<div class="t" style="left:547.50px;top:424.59px;font-size:4.63px;color:#666;transform:scaleX(1.1429);">11/07/2019</div>
<div class="t" style="left:609.50px;top:424.59px;font-size:4.63px;color:#666;transform:scaleX(1.0420);">1</div>
<div class="t" style="left:635.50px;top:424.59px;font-size:4.63px;color:#666;transform:scaleX(1.1347);">markleemahn@siem...</div>
<svg style="left:0;top:0" width="800" height="460" viewBox="0 0 800 460"><g fill="none" stroke="#555" stroke-width="0.65"><path d="M765 427.69999999999993h-0.8q-1.5 0-1.5-1.7q0-1.5 1.4-1.7q0.5-2.1 2.3-2.1q1.8 0 2.3 1.8q1.3 0.3 1.3 1.9q0 1.8-1.7 1.8h-0.7 M766.3 424.9v4.4 M765.3 428.29999999999995l1 1 1-1"/></g><circle cx="779" cy="425.49999999999994" r="3.3" fill="#2a93c0"/><path d="M778.2 424.29999999999995l1.8 1.2-1.8 1.2" fill="#8ccbe4" stroke="#cde9f4" stroke-width="0.5"/></svg>
<div class="a" style="left:269.5px;top:437.20000000000005px;width:519px;height:0.8px;background:#e6e6e6"></div>
</body></html>
